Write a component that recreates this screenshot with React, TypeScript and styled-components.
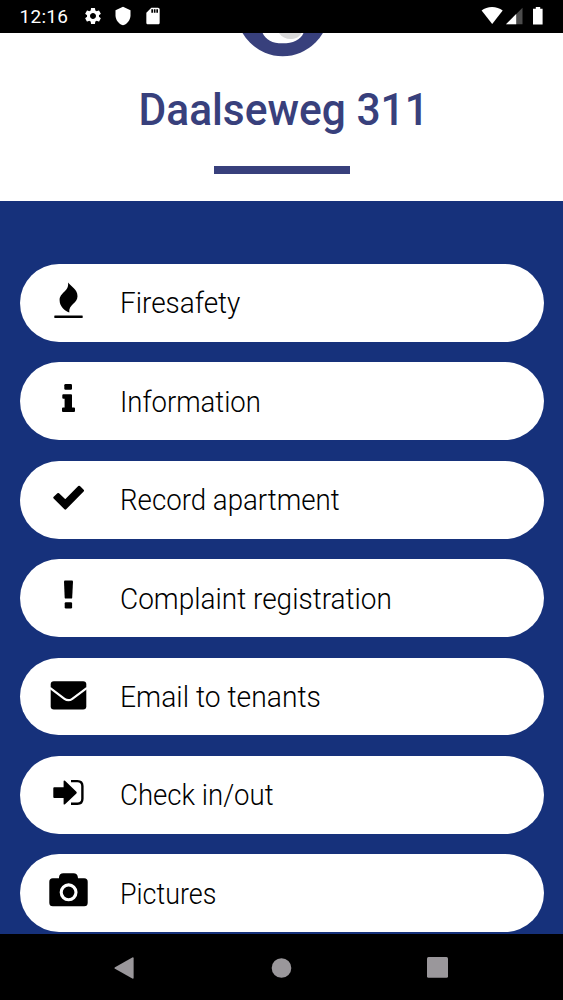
import React from "react";
import styled, { createGlobalStyle } from "styled-components";
import { MdSettings, MdShield, MdSdCard } from "react-icons/md";

const GlobalStyle = createGlobalStyle`
  *, *::before, *::after { box-sizing: border-box; }
  html, body { margin: 0; padding: 0; background: #000; }
  body { font-family: Roboto, "Liberation Sans", sans-serif; }
  svg { display: block; flex: none; }
`;

const Screen = styled.div`
  display: flex;
  flex-direction: column;
  width: 563px;
  height: 1000px;
  overflow: hidden;
  background: #16317b;
`;

const StatusBar = styled.header`
  display: flex;
  align-items: center;
  justify-content: space-between;
  flex: none;
  height: 32.6px;
  padding: 0 20px 0 19.5px;
  background: #000;
  color: #fff;
`;

const StatusGroup = styled.div<{ $gap: number }>`
  display: flex;
  align-items: center;
  gap: ${(p) => p.$gap}px;
`;

const Clock = styled.span`
  width: 53px;
  font-size: 19px;
  font-weight: 400;
  line-height: 32px;
  padding-top: 2px;
  letter-spacing: 0.3px;
`;

const Header = styled.section`
  display: flex;
  flex-direction: column;
  align-items: center;
  flex: none;
  height: 168.9px;
  background: #fff;
`;

const Title = styled.h1<{ $scale: number }>`
  margin: 26px 0 0;
  padding-left: 4px;
  font-size: 45px;
  font-weight: 500;
  line-height: 54px;
  color: #38407c;
  white-space: nowrap;
  transform: scaleX(${(p) => p.$scale});
`;

const Rule = styled.div`
  width: 136.5px;
  height: 8px;
  margin: 29.4px 0 0 1px;
  background: #38407c;
`;

const Menu = styled.main`
  display: flex;
  flex-direction: column;
  gap: 20.6px;
  flex: 1;
  min-height: 0;
  padding: 62.5px 19.3px 0 20.3px;
  overflow: hidden;
`;

const MenuButton = styled.button`
  display: flex;
  align-items: center;
  flex: none;
  gap: 32.2px;
  height: 77.8px;
  padding: 0 0 0 27.7px;
  border: 0;
  border-radius: 39px;
  background: #fff;
  color: #000;
  font-family: inherit;
  text-align: left;
`;

const IconBox = styled.span`
  flex: none;
  width: 40px;
  height: 40px;
  margin-bottom: 1px;
`;

const Label = styled.span<{ $scale: number }>`
  padding-top: 1px;
  font-size: 29px;
  font-weight: 300;
  line-height: 36px;
  white-space: nowrap;
  transform: scaleX(${(p) => p.$scale});
  transform-origin: left center;
`;

const NavBar = styled.nav`
  display: flex;
  align-items: center;
  justify-content: space-between;
  flex: none;
  height: 66px;
  padding: 1px 115.3px 0 114.3px;
  background: #000;
`;

const FireIcon = () => (
  <>
    <path d="M20 .6C23.5 4.8 29.5 7.5 29.5 14.3C29.5 21.5 20.3 22.5 21.3 30.4C16.5 28.6 11.6 24.4 11.6 18.2C11.6 10.5 21.5 9.5 20 .6Z" />
    <rect x="6.3" y="33.6" width="28.4" height="2.4" rx=".4" />
  </>
);

const InfoIcon = () => (
  <>
    <rect x="16.3" y="3" width="7.7" height="5.8" rx="1.2" />
    <path d="M15.3 13.2H23Q24 13.2 24 14.2V26.4H26Q27 26.4 27 27.4V30Q27 31 26 31H15Q14 31 14 30V27.4Q14 26.4 15 26.4H16.6V17.8H15.3Q14.3 17.8 14.3 16.8V14.2Q14.3 13.2 15.3 13.2Z" />
  </>
);

const CheckIcon = () => (
  <path
    d="M6.5 18.6L10.2 15.2L17.3 21.9L31.1 7.9L34.8 11.6L17.3 29.4Z"
    stroke="currentColor"
    strokeWidth="2.4"
    strokeLinejoin="round"
  />
);

const ExclamationIcon = () => (
  <>
    <path d="M17 2.6H24Q25 2.6 25 3.6L24.2 19.7Q24.1 20.6 23.2 20.6H17.7Q16.8 20.6 16.7 19.7L16 3.6Q16 2.6 17 2.6Z" />
    <rect x="16.7" y="24.3" width="7.4" height="6.2" rx="1.2" />
  </>
);

const EnvelopeIcon = () => (
  <>
    <rect x="2.7" y="5.3" width="35.6" height="28.2" rx="3.2" />
    <path
      d="M2 11.9L16.5 22.8Q20.4 25.6 24.3 22.8L39 11.9"
      fill="none"
      stroke="#fff"
      strokeWidth="2.2"
    />
  </>
);

const SignInIcon = () => (
  <>
    <path d="M6.2 13.3H15.6V7.3Q15.7 5.8 17 6.8L28.4 17.7Q29.2 18.6 28.4 19.5L17 30.2Q15.7 31.2 15.6 29.7V23.9H6.2Q5.3 23.9 5.3 23V14.2Q5.3 13.3 6.2 13.3Z" />
    <path
      d="M23 7.1H29.4Q34.4 7.1 34.4 12.1V24.8Q34.4 29.8 29.4 29.8H23"
      fill="none"
      stroke="currentColor"
      strokeWidth="2.4"
    />
  </>
);

const CameraIcon = () => (
  <>
    <path d="M4.8 5.2H11V4.2Q11.4 .3 15.3 .3H25.5Q29.4 .3 29.9 4.2V5.2H36.2Q39.7 5.2 39.7 8.7V29.8Q39.7 33.3 36.2 33.3H4.8Q1.3 33.3 1.3 29.8V8.7Q1.3 5.2 4.8 5.2Z" />
    <circle cx="20.6" cy="19.3" r="7.4" stroke="#fff" strokeWidth="3.1" />
  </>
);

const items = [
  { label: "Firesafety", scale: 0.963, Icon: FireIcon },
  { label: "Information", scale: 0.948, Icon: InfoIcon },
  { label: "Record apartment", scale: 0.954, Icon: CheckIcon },
  { label: "Complaint registration", scale: 0.965, Icon: ExclamationIcon },
  { label: "Email to tenants", scale: 0.975, Icon: EnvelopeIcon },
  { label: "Check in/out", scale: 0.951, Icon: SignInIcon },
  { label: "Pictures", scale: 0.928, Icon: CameraIcon },
];

const LogoEdge = () => (
  <svg width="96" height="24" viewBox="0 0 96 24">
    <circle cx="48.7" cy="-23.2" r="46.4" fill="#38407c" />
    <path d="M28.600 0C32 7 38 10.300 48.500 10.300S66.500 7 69.500 0Z" fill="#fff" />
    <path d="M45 0C48 4.500 53 6.500 58 6C63 5.500 66 3 67.500 0Z" fill="#d9d9da" />
  </svg>
);

export default function App() {
  return (
    <>
      <GlobalStyle />
      <Screen>
        <StatusBar>
          <StatusGroup $gap={10.2}>
            <Clock>12:16</Clock>
            <MdSettings size={20} />
            <MdShield size={20} />
            <MdSdCard size={20} />
          </StatusGroup>
          <StatusGroup $gap={0}>
            <svg width="62" height="20" viewBox="0 0 62 20" fill="#fff">
              <path d="M.6 4.600C6-.200 16-.200 21.700 4.600L11.200 17.900Z" />
              <path d="M41.500 1.800V18.300H25Z" fill="#4c4c4c" />
              <path d="M35.200 8.100V18.300H25Z" />
              <path d="M54.800 1H59.200V2.700H61.600V18.600H52V2.700H54.800Z" />
            </svg>
          </StatusGroup>
        </StatusBar>
        <Header>
          <LogoEdge />
          <Title $scale={0.944}>Daalseweg 311</Title>
          <Rule />
        </Header>
        <Menu>
          {items.map(({ label, scale, Icon }) => (
            <MenuButton key={label} type="button">
              <IconBox>
                <svg width="40" height="40" viewBox="0 0 40 40" fill="currentColor">
                  <Icon />
                </svg>
              </IconBox>
              <Label $scale={scale}>{label}</Label>
            </MenuButton>
          ))}
        </Menu>
        <NavBar>
          <svg width="20" height="22" viewBox="0 0 20 22" fill="#9a979b">
            <path d="M1 10.200L18.300.400Q19.600-.100 19.600 1.200V20.800Q19.600 22.100 18.300 21.600L1 11.800Q-.100 11 1 10.200Z" />
          </svg>
          <svg width="22" height="20" viewBox="0 0 22 20" fill="#9a979b">
            <circle cx="11.500" cy="10" r="9.800" />
          </svg>
          <svg width="21" height="21" viewBox="0 0 21 21" fill="#9a979b">
            <rect width="21" height="20.800" rx="1.500" />
          </svg>
        </NavBar>
      </Screen>
    </>
  );
}
